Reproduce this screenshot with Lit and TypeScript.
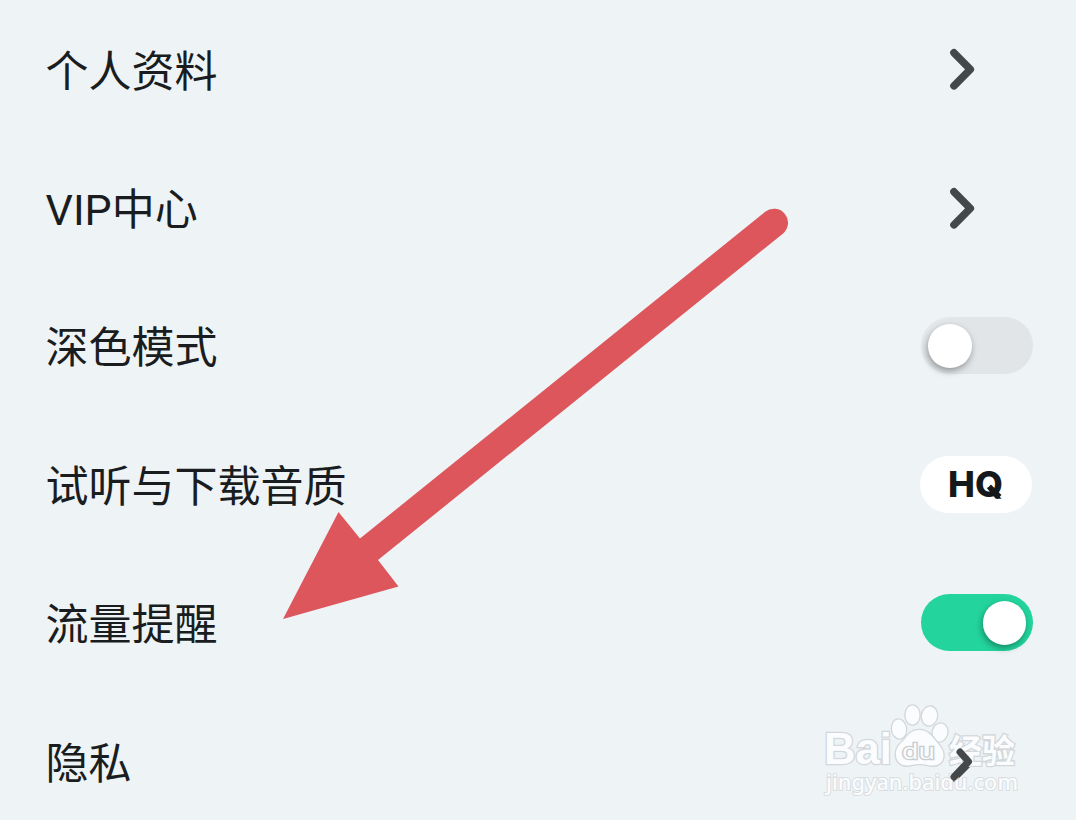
import { LitElement, html, css } from "lit";
import { customElement, property } from "lit/decorators.js";

type Kind = "link" | "off" | "on" | "quality";

@customElement("setting-row")
class SettingRow extends LitElement {
  @property() label = "";
  @property() kind: Kind = "link";

  static styles = css`
    :host {
      display: flex;
      align-items: center;
      justify-content: space-between;
      height: 138.4px;
      padding: 0 43px 0 45.5px;
      box-sizing: border-box;
    }
    .label {
      font: 400 43px/60px Roboto, "Noto Sans CJK SC", sans-serif;
      color: #1a1d20;
      white-space: nowrap;
      padding-top: 5px;
    }
    .chevron {
      display: block;
      width: 30px;
      height: 46px;
      margin-right: 56px;
    }
    .switch {
      display: flex;
      align-items: center;
      width: 112px;
      height: 57px;
      padding: 0 7px;
      box-sizing: border-box;
      border-radius: 29px;
      background: #e2e6e9;
    }
    .switch.off {
      background: linear-gradient(90deg, #e6eaed 0, #e1e5e8 40%);
    }
    .switch.on {
      justify-content: flex-end;
      background: #23d59d;
    }
    .knob {
      width: 43.5px;
      height: 43.5px;
      border-radius: 50%;
      background: #fff;
      box-shadow: -1px 3px 7px rgba(0, 0, 0, 0.36);
    }
    .pill {
      display: flex;
      align-items: center;
      justify-content: center;
      width: 112px;
      height: 57px;
      margin-right: 1px;
      border-radius: 29px;
      background: #fff;
    }
    .hq {
      display: block;
      width: 112px;
      height: 57px;
    }
    .hq text {
      font: 800 36px Inter, sans-serif;
      fill: #16191b;
    }
  `;

  private control() {
    switch (this.kind) {
      case "off":
        return html`<div class="switch off"><div class="knob"></div></div>`;
      case "on":
        return html`<div class="switch on"><div class="knob"></div></div>`;
      case "quality":
        return html`<div class="pill">
          <svg class="hq" viewBox="0 0 112 57">
            <text x="28" y="41" textLength="55" lengthAdjust="spacingAndGlyphs">HQ</text>
            <path d="M69 30.500 79.500 41" stroke="#16191b" stroke-width="5.500" />
          </svg>
        </div>`;
      default:
        return html`<svg class="chevron" viewBox="0 0 30 46">
          <path d="M7 6.800 23.300 23.300 7 39.800" fill="none" stroke="#44484b" stroke-width="7.600"
            stroke-linecap="round" stroke-linejoin="round" />
        </svg>`;
    }
  }

  render() {
    return html`<span class="label">${this.label}</span>${this.control()}`;
  }
}

@customElement("app-root")
class AppRoot extends LitElement {
  static styles = css`
    :host {
      display: block;
      position: relative;
      width: 1076px;
      height: 820px;
      overflow: hidden;
      background: #eef3f6;
    }
    .list {
      display: flex;
      flex-direction: column;
    }
    .overlay {
      position: absolute;
      inset: 0;
      width: 1076px;
      height: 820px;
      pointer-events: none;
    }
    .mark {
      fill: #fafcfe;
      stroke: #d3d7da;
      stroke-width: 2.6px;
      paint-order: stroke;
    }
    .brand {
      font: 700 44px "Liberation Sans", sans-serif;
    }
    .du {
      font: 400 22px "Open Sans", sans-serif;
      stroke: #c9cdd0;
    }
    .cjk {
      font: 700 33px "Noto Sans CJK SC", sans-serif;
    }
    .site {
      font: 500 22px "Noto Sans", sans-serif;
      stroke: #d9dde0;
      stroke-width: 2px;
    }
  `;

  private rows: { label: string; kind: Kind }[] = [
    { label: "个人资料", kind: "link" },
    { label: "VIP中心", kind: "link" },
    { label: "深色模式", kind: "off" },
    { label: "试听与下载音质", kind: "quality" },
    { label: "流量提醒", kind: "on" },
    { label: "隐私", kind: "link" },
  ];

  render() {
    return html`
      <div class="list">
        ${this.rows.map((r) => html`<setting-row .label=${r.label} .kind=${r.kind}></setting-row>`)}
      </div>
      <svg class="overlay" viewBox="0 0 1076 820">
        <path fill="#dc565c"
          d="M283 619 338.500 512 360 538.500 765.200 211.800A13.900 13.900 0 0 1 782.800 233.700L378 560 398.500 586.500Z" />
        <g class="mark">
          <text class="brand" x="824" y="764" textLength="68" lengthAdjust="spacingAndGlyphs">Bai</text>
          <ellipse cx="899" cy="729" rx="7" ry="9.500" transform="rotate(-8 899 729)" />
          <ellipse cx="912.500" cy="715" rx="7" ry="9.500" />
          <ellipse cx="929.500" cy="716" rx="7.500" ry="9.500" transform="rotate(10 929.500 716)" />
          <ellipse cx="940" cy="732.500" rx="7.300" ry="9" transform="rotate(14 940 732.500)" />
          <path d="M919 730C911 730 907 736 904 740C900 744 895 748 896 756C897 764 904 767 911 765C917 763.500 923 763.500 928 765C936 767 943 764 943.500 756C944 749 938 744 935 740C931 735 927 730 919 730Z" />
          <text class="du" x="902" y="759" textLength="33" lengthAdjust="spacingAndGlyphs">du</text>
          <text class="cjk" x="949" y="763" textLength="66" lengthAdjust="spacingAndGlyphs">经验</text>
          <text class="site" x="826" y="790" textLength="192" lengthAdjust="spacingAndGlyphs">jingyan.baidu.com</text>
        </g>
        <path d="M960 752 968.500 761.500 954 777" fill="none" stroke="#44484b" stroke-width="7"
          stroke-linecap="round" stroke-linejoin="round" />
      </svg>
    `;
  }
}
